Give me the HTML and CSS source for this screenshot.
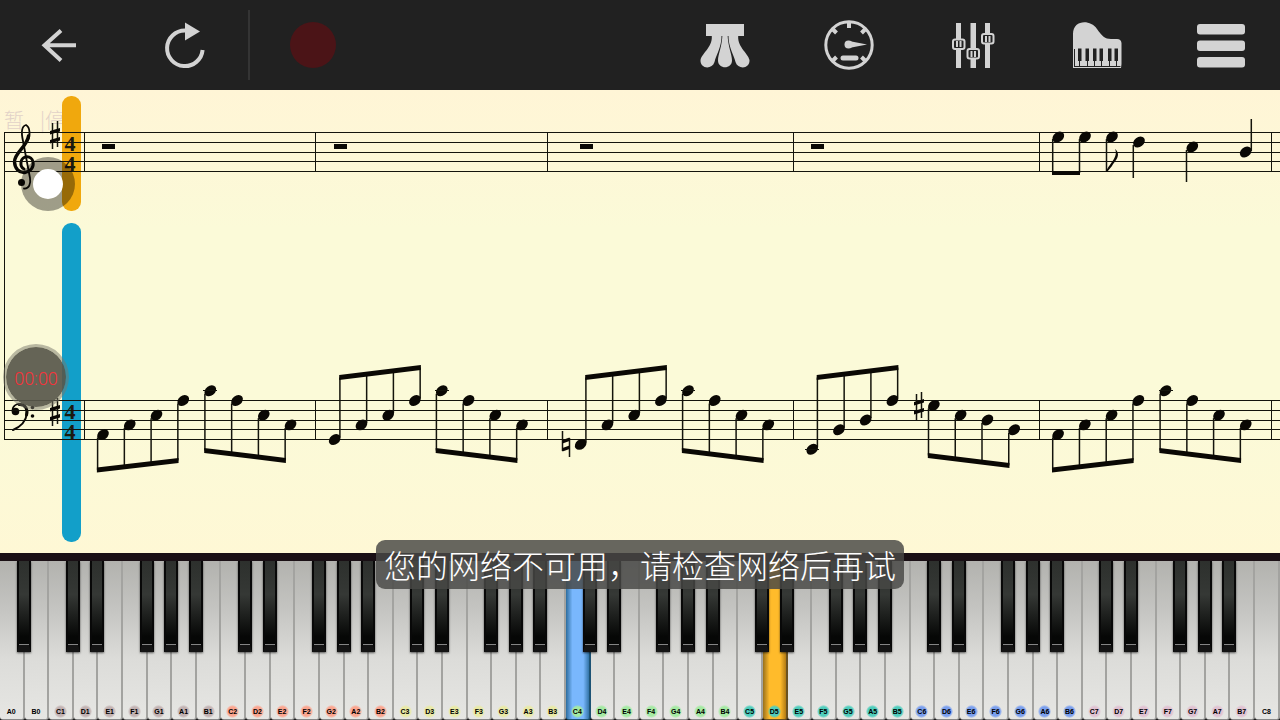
FILE: index.html
```html
<!DOCTYPE html>
<html lang="zh-CN">
<head>
    <meta charset="UTF-8">
    <meta name="viewport" content="width=device-width, initial-scale=1.0">
    <title>Piano</title>
    <link rel="stylesheet" href="styles.css">
</head>
<body>
    <header class="toolbar">
        <button class="tool" aria-label="Back">
            <svg viewBox="0 0 52 52"><path class="line" d="M43 26.3H12M28 11.5L11.5 26.3L28 41.5"/></svg>
        </button>
        <button class="tool tool-reload" aria-label="Restart">
            <svg viewBox="0 0 52 52">
                <path class="line" d="M44.6 31A17.8 17.8 0 1 1 27 11.5"/>
                <path d="M27 3.5L42 12.5L27 21.5Z"/>
            </svg>
        </button>
        <span class="divider"></span>
        <button class="tool" aria-label="Record">
            <svg viewBox="0 0 52 52"><circle class="rec" cx="25" cy="26" r="23"/></svg>
        </button>
        <div class="tools-right">
            <button class="tool" aria-label="Pedal">
                <svg viewBox="0 0 52 52">
                    <path d="M7 5H45V17H7Z"/>
                    <path d="M12.500 15C15 27 3 34 1.5 41C1 50 13 51 15.500 43C17 36 23 28 22.500 15Z"/>
                    <path d="M23.500 15H28.500C29 28 33 35 33 41.500C33 50.500 19 50.500 19 41.500C19 35 23 28 23.500 15Z"/>
                    <path d="M39.500 15C37 27 49 34 50.500 41C51 50 39 51 36.500 43C35 36 29 28 29.500 15Z"/>
                </svg>
            </button>
            <button class="tool" aria-label="Tempo">
                <svg viewBox="0 0 52 52">
                    <circle class="ring" cx="26" cy="26" r="23.200"/>
                    <path class="line" d="M26 4V9M10 10.500L13.500 14M42 10.500L38.500 14M10 41.500L13.500 38M42 41.500L38.500 38"/>
                    <circle cx="25.500" cy="25.500" r="4"/>
                    <path d="M26 22L44 25.500L26 29Z"/>
                    <rect x="17.500" y="36.500" width="18" height="5" rx="2.500"/>
                </svg>
            </button>
            <button class="tool" aria-label="Mixer">
                <svg viewBox="0 0 52 52">
                    <path d="M9 4H14V49H9ZM23.500 4H29V49H23.500ZM38 4H43V49H38Z"/>
                    <g class="knob">
                        <rect x="6" y="20.500" width="11.500" height="9.500" rx="2"/>
                        <rect x="20.500" y="30" width="11.500" height="9.500" rx="2"/>
                        <rect x="35" y="15" width="11.500" height="9.500" rx="2"/>
                        <path d="M10 22V28M13.500 22V28M24.500 32V38M28 32V38M39 17V23M42.500 17V23"/>
                    </g>
                </svg>
            </button>
            <button class="tool" aria-label="Instrument">
                <svg viewBox="0 0 52 52">
                    <path d="M2 49V15C2 1 19 0 26 10C31 17 34 20 40 20H46Q50 20 50.500 24V45L50 49Z"/>
                    <path class="dark" d="M7 29.500H10.500V42H7ZM14.500 29.500H18V42H14.500ZM22 29.500H25.500V42H22ZM28.500 29.500H32V42H28.500ZM37 29.500H40.500V42H37ZM43.500 29.500H47V42H43.500Z"/>
                    <path class="hair" d="M3 47.500H49.500M3.500 30V47M8.500 42V47M16.500 42V47M23.500 42V47M30.500 42V47M38.500 42V47M45.500 42V47"/>
                </svg>
            </button>
            <button class="tool" aria-label="Menu">
                <svg viewBox="0 0 52 52">
                    <rect x="2" y="5" width="48" height="10.500" rx="3"/>
                    <rect x="2" y="21.500" width="48" height="10.500" rx="3"/>
                    <rect x="2" y="38" width="48" height="10.500" rx="3"/>
                </svg>
            </button>
        </div>
    </header>

    <main class="score">
        <svg class="sheet" id="sheet" aria-label="Sheet music">
            <text class="ghost" x="4" y="38">暂</text>
            <text class="ghost" x="40" y="38">|停</text>
            <rect class="cursor-right" x="62" y="6" width="19" height="115" rx="9"/>
            <rect class="cursor-left" x="62" y="133" width="19" height="319" rx="9"/>

            <!-- treble clef -->
            <g class="clef">
                <path stroke-width="1.800" d="M24 98.500C29 99 31 94 30 88L23 51C21 42 22 36 26 35C30 37 31 46 27 52"/>
                <path stroke-width="3.400" d="M28.500 46C27 57 14 63 14.500 72C15 79 19 83 25 82.500"/>
                <path stroke-width="3" d="M24 82.500C31 82 34 77 33 72C32 65 22 65 21 72C20.500 76 22 78 24 79"/>
                <circle class="ink" cx="21.500" cy="92.500" r="3.500"/>
            </g>

            <!-- bass clef -->
            <g class="clef">
                <path stroke-width="1.600" d="M12.500 321C12 316 17 313.500 20 314"/>
                <path stroke-width="3" d="M19 314.500C26 314 28 320 26.500 325"/>
                <path stroke-width="2" d="M27 323C26 332 20 337 13 340"/>
                <circle class="ink" cx="15.500" cy="321.500" r="3.800"/>
                <circle class="ink" cx="32.500" cy="317.500" r="1.800"/>
                <circle class="ink" cx="32.500" cy="326" r="1.800"/>
            </g>

            <g class="meter">
                <text x="70" y="61">4</text>
                <text x="70" y="81">4</text>
                <text x="70" y="329">4</text>
                <text x="70" y="349">4</text>
            </g>
        </svg>
        <button class="bubble" aria-label="Screen recorder"></button>
        <div class="timer">00:00</div>
    </main>

    <section class="piano" id="piano" aria-label="Piano keyboard"></section>

    <div class="toast" role="status">您的网络不可用，请检查网络后再试</div>

    <script src="script.js"></script>
</body>
</html>
```
FILE: styles.css
```css
* {
    box-sizing: border-box;
}

body {
    margin: 0;
    height: 100vh;
    display: flex;
    flex-direction: column;
    position: relative;
    overflow: hidden;
    background-color: #212121;
    font-family: "Liberation Sans", "Noto Sans CJK SC", sans-serif;
}

button {
    padding: 0;
    border: none;
    background: none;
    cursor: pointer;
}

/* toolbar */
.toolbar {
    flex: none;
    height: 90px;
    padding: 0 33px;
    display: flex;
    align-items: center;
    background-color: #212121;
}

.tool {
    width: 52px;
    height: 52px;
}

.tool svg {
    display: block;
    width: 52px;
    height: 52px;
    fill: #d3d3d3;
}

.tool .line,
.tool .ring {
    fill: none;
    stroke: #d3d3d3;
    stroke-width: 4;
}

.tool .ring {
    stroke-width: 3;
}

.tool .rec {
    fill: #4b1417;
}

.tool .knob {
    stroke: #d3d3d3;
    stroke-width: 2;
    fill: #212121;
}

.tool .dark {
    fill: #212121;
}

.tool .hair {
    stroke: #212121;
    stroke-width: 1;
}

.tool-reload {
    margin-left: 73px;
}

.divider {
    width: 2px;
    height: 70px;
    margin: 0 38px;
    background-color: #343434;
}

.tools-right {
    margin-left: auto;
    display: flex;
    gap: 72px;
}

/* score */
.score {
    flex: 1;
    min-height: 0;
    position: relative;
    background: linear-gradient(#fff5d6, #fbfad8 30%, #fbfad8 70%, #fef8d5);
}

.sheet {
    display: block;
    width: 100%;
    height: 100%;
}

.ghost {
    font-family: "Noto Sans CJK SC", sans-serif;
    font-size: 20px;
    font-weight: 300;
    fill: #e2d2c8;
}

.cursor-right {
    fill: #f0a80d;
}

.cursor-left {
    fill: #129fc9;
}

.staff {
    fill: #14140c;
    shape-rendering: crispEdges;
}

.ink {
    fill: #0a0804;
}

.stem {
    stroke: #14140c;
    stroke-width: 1.5;
    fill: none;
}

.clef {
    fill: none;
    stroke: #0a0804;
    stroke-linecap: round;
}

.clef .ink {
    fill: #0a0804;
    stroke: none;
}

.meter {
    font-family: "Liberation Serif", serif;
    font-size: 22px;
    font-weight: bold;
    text-anchor: middle;
    fill: #1c1a10;
}

/* floating recorder widgets */
.bubble {
    position: absolute;
    left: 21px;
    top: 67px;
    width: 54px;
    height: 54px;
    border: 12px solid rgba(0, 0, 0, 0.37);
    border-radius: 50%;
    background-color: #fff;
    background-clip: padding-box;
}

.timer {
    position: absolute;
    left: 3px;
    top: 254px;
    width: 66px;
    height: 66px;
    padding-top: 3px;
    display: flex;
    align-items: center;
    justify-content: center;
    border: 3px solid rgba(120, 118, 105, 0.5);
    border-radius: 50%;
    background-color: rgba(88, 87, 75, 0.92);
    background-clip: padding-box;
    color: #f5333a;
    font-family: Roboto, sans-serif;
    font-size: 18px;
    font-weight: 300;
}

/* keyboard */
.piano {
    flex: none;
    height: 167px;
    display: flex;
    border-top: 8px solid #1a1015;
    background-color: #111;
}

.slot {
    flex: 1;
    min-width: 0;
    position: relative;
}

.key {
    display: flex;
    align-items: flex-end;
    justify-content: center;
    width: 100%;
    height: 100%;
    padding-bottom: 1px;
    border-right: 2px solid #a3a3a0;
    border-bottom: 1px solid #888;
    border-radius: 0 0 3px 3px;
    background: linear-gradient(#b2b2ae, #c4c4c1 30%, #dcdcd9 62%, #e6e6e3);
}

.key-left {
    border-color: #1d5375;
    background: linear-gradient(90deg, #2d6d9d, #79b7fd 28%, #79b7fd 75%, #3475a8);
}

.key-right {
    border-color: #6b5220;
    background: linear-gradient(90deg, #98701c, #ffbb2b 28%, #ffbb2b 75%, #b27b14);
}

.black {
    position: absolute;
    z-index: 1;
    top: 0;
    right: -6px;
    width: 14px;
    height: 91px;
    border: 2px solid #080808;
    border-top: none;
    border-bottom: 7px solid #141414;
    background: linear-gradient(#2d302d, #353835 40%, #060706 90%);
    box-shadow: 0 1px 2px rgba(0, 0, 0, 0.6), inset 0 -1px 0 #858585;
}

.label {
    width: 13px;
    height: 13px;
    border-radius: 50%;
    color: #000;
    font-size: 7px;
    font-weight: bold;
    line-height: 13px;
    text-align: center;
    background: radial-gradient(var(--tint, transparent) 50%, transparent 75%);
}

.oct1 { --tint: #c2b2b2; }
.oct2 { --tint: #fba58f; }
.oct3 { --tint: #e9eaa5; }
.oct4 { --tint: #a4eaa2; }
.oct5 { --tint: #4fcdbc; }
.oct6 { --tint: #7a9fee; }
.oct7 { --tint: #e0c2d2; }

.toast {
    position: absolute;
    z-index: 2;
    left: 50%;
    bottom: 131px;
    transform: translateX(-50%);
    padding: 0 8px 1px;
    border-radius: 9px;
    background-color: rgba(72, 72, 70, 0.83);
    color: #fff;
    font-family: "Noto Sans CJK SC", sans-serif;
    font-size: 32px;
    font-weight: 300;
    line-height: 48px;
    white-space: nowrap;
}
```
FILE: script.js
```js
const sheet = document.getElementById('sheet');
const piano = document.getElementById('piano');

const TREBLE = 42;
const BASS = 310;
const HALF = 4.875; // half a staff space
const STEP = 26.75; // one eighth note

function draw(tag, cls, attrs) {
    const el = document.createElementNS('http://www.w3.org/2000/svg', tag);
    el.setAttribute('class', cls);
    for (const name in attrs) {
        el.setAttribute(name, attrs[name]);
    }
    sheet.appendChild(el);
}

function stem(x, y1, y2) {
    draw('path', 'stem', { d: `M${x} ${y1}V${y2}` });
}

function head(x, y) {
    draw('ellipse', 'ink', { cx: x, cy: y, rx: 6.4, ry: 4.8, transform: `rotate(-38 ${x} ${y})` });
}

function ledger(x, y) {
    draw('rect', 'staff', { x: x - 7, y: Math.floor(y), width: 14, height: 1 });
}

function sharp(x, y) {
    draw('path', 'stem', { d: `M${x - 2.5} ${y - 12}V${y + 14}M${x + 2.5} ${y - 14}V${y + 12}` });
    draw('path', 'ink', { d: `M${x - 5} ${y - 4}l10 -3v3.500l-10 3zM${x - 5} ${y + 5}l10 -3v3.500l-10 3z` });
}

function natural(x, y) {
    draw('path', 'stem', { d: `M${x - 3.5} ${y - 13}V${y + 7}M${x + 3.5} ${y - 6}V${y + 13}` });
    draw('path', 'ink', { d: `M${x - 3.5} ${y - 4}l7 -2.500v3.500l-7 2.500zM${x - 3.5} ${y + 4}l7 -2.500v3.500l-7 2.500z` });
}

// steps are counted down from the top line of the bass staff
function group(x, steps, up, from, to) {
    const side = up ? 5.2 : -5.4;
    const x1 = x + side;
    const x2 = x + STEP * 3 + side;
    steps.forEach((step, i) => {
        const nx = x + STEP * i;
        const ny = BASS + 0.5 + step * HALF;
        stem(nx + side, ny + (up ? -2 : 3), from + (to - from) * i / 3);
        head(nx, ny);
        if (step === -2 || step === 10) {
            ledger(nx, ny);
        }
    });
    draw('path', 'ink', {
        d: `M${x1 - 0.7} ${from - 2.5}L${x2 + 0.7} ${to - 2.5}V${to + 2.5}L${x1 - 0.7} ${from + 2.5}Z`
    });
}

[TREBLE, BASS].forEach(top => {
    [0, 10, 20, 29, 39].forEach(dy => {
        draw('rect', 'staff', { x: 5, y: top + dy, width: '100%', height: 1 });
    });
    [84, 315, 547, 793, 1039, 1271].forEach(x => {
        draw('rect', 'staff', { x: x, y: top + 1, width: 1, height: 39 });
    });
});
draw('rect', 'staff', { x: 4, y: TREBLE, width: 1, height: 308 });

sharp(55, 45);
sharp(55, 322);

// right hand
[102, 334, 580, 811].forEach(x => {
    draw('rect', 'ink', { x: x, y: 54, width: 13, height: 5 });
});
[[1058.3, 47], [1085, 47], [1112, 47], [1139, 52], [1192.3, 57], [1245.7, 62]].forEach(n => head(n[0], n[1]));
stem(1052.7, 49, 83);
stem(1079.5, 49, 83);
draw('rect', 'ink', { x: 1052, y: 81, width: 28, height: 4 });
stem(1106.5, 49, 82);
draw('path', 'ink', { d: 'M1106 82C1108 75 1119 67 1115 59C1122 65 1115 71 1112 76L1107 82Z' });
stem(1133.3, 55, 88);
stem(1186.5, 60, 92);
stem(1251.3, 29, 61);

// left hand
group(103, [7, 5, 3, 0], false, 380, 370.5);
group(210.3, [-2, 0, 3, 5], false, 360.5, 370.5);
group(334.7, [8, 5, 3, 0], true, 287.5, 277.5);
group(441.8, [-2, 0, 3, 5], false, 360.5, 370.5);
natural(566, 354);
group(580.7, [9, 5, 3, 0], true, 287.5, 277.5);
group(688, [-2, 0, 3, 5], false, 360.5, 370.5);
group(812.2, [10, 6, 4, 0], true, 287.5, 277.5);
sharp(919, 316);
group(933.9, [1, 3, 4, 6], false, 365.5, 375.5);
group(1058.1, [7, 5, 3, 0], false, 380, 370.5);
group(1165.5, [-2, 0, 3, 5], false, 360.5, 370.5);

// 52 white keys, A0 to C8
const names = 'ABCDEFG';
const pressed = { C4: 'key-left', D5: 'key-right' };

for (let i = 0; i < 52; i++) {
    const letter = names[i % 7];
    const octave = Math.floor((i + 5) / 7);
    const name = letter + octave;

    const slot = document.createElement('div');
    slot.className = 'slot';

    const key = document.createElement('button');
    key.className = 'key ' + (pressed[name] || '');
    key.innerHTML = `<span class="label oct${octave}">${name}</span>`;
    slot.appendChild(key);

    if ('ACDFG'.includes(letter) && i < 51) {
        const black = document.createElement('button');
        black.className = 'black';
        black.setAttribute('aria-label', name + ' sharp');
        slot.appendChild(black);
    }
    piano.appendChild(slot);
}
```
